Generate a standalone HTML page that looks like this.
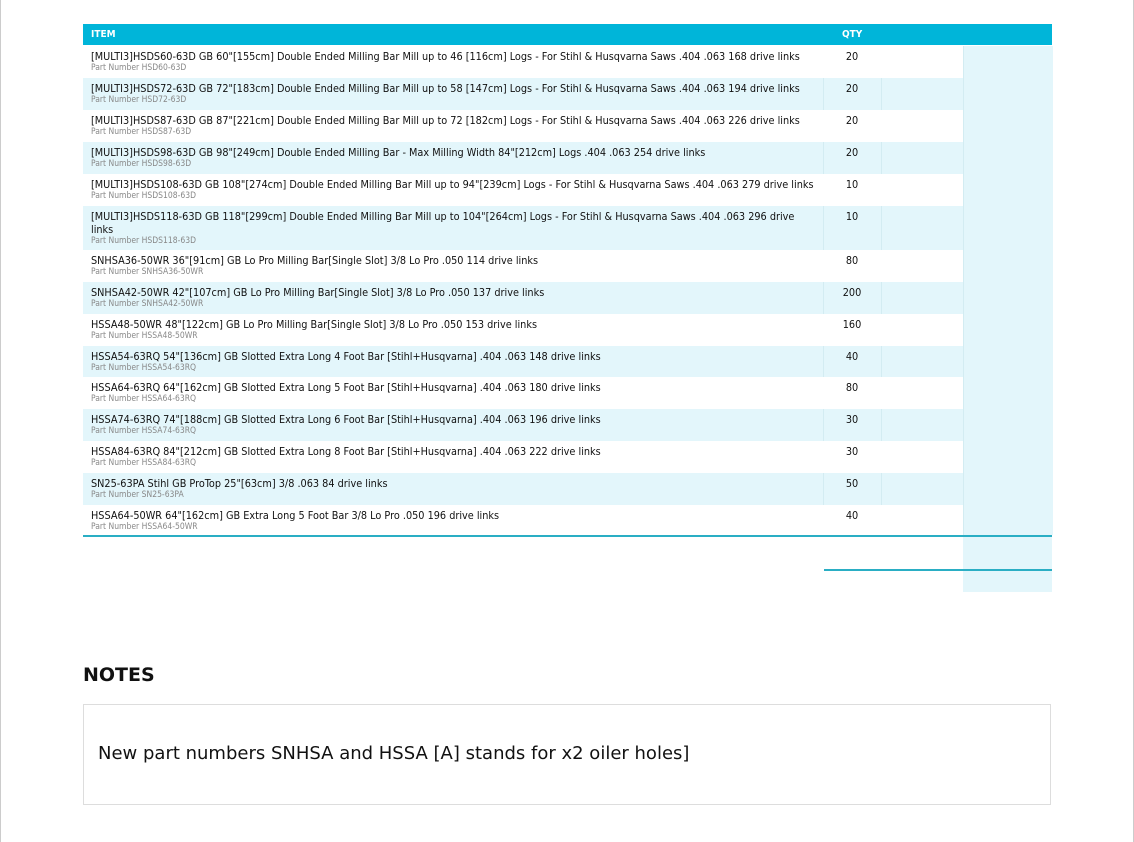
<!DOCTYPE html>
<html><head><meta charset="utf-8"><style>
body{margin:0;width:1134px;height:842px;background:#fff;position:relative;overflow:hidden;font-family:"DejaVu Sans Condensed","DejaVu Sans","Liberation Sans",sans-serif;}
.frame{position:absolute;left:0;top:0;width:1134px;height:842px;border-left:1px solid #ccc;border-right:1px solid #ccc;box-sizing:border-box}
.hdr{position:absolute;left:83px;top:24px;width:969px;height:21px;background:#00b5d9;color:#fff;font-weight:bold;font-size:10px}
.hdr span{position:absolute;top:5px}
.row{position:absolute;left:83px;width:969px;box-sizing:border-box}
.row.alt{background:#e3f6fb}
.row.alt .c{border-left:1px solid #d3ecf2}
.c{position:absolute;top:0;bottom:0}
.last{position:absolute;left:880px;width:89px;top:0;bottom:0;background:#e3f6fb;border-left:1px solid #d3ecf2}
.t{position:absolute;left:8px;top:4px;font-size:10.8px;color:#111;width:724px;line-height:13px}
.p{display:block;font-size:8.5px;color:#888;line-height:10px;margin-top:0}
.q{position:absolute;left:740px;width:58px;top:4px;text-align:center;font-size:10.8px;color:#111}
</style></head><body>
<div class="frame"></div>
<div class="hdr"><span style="left:8px">ITEM</span><span style="left:759px">QTY</span></div>
<div id="rows"></div>
<div style="position:absolute;left:83px;top:535px;width:969px;height:2px;background:#2aaec4"></div>
<div style="position:absolute;left:963px;top:537px;width:89px;height:55px;background:#e3f6fb"></div>
<div style="position:absolute;left:824px;top:569px;width:228px;height:2px;background:#2aaec4"></div>
<div style="position:absolute;left:83px;top:664px;font-family:'DejaVu Sans',sans-serif;font-weight:bold;font-size:19px;color:#111">NOTES</div>
<div style="position:absolute;left:83px;top:704px;width:968px;height:101px;border:1px solid #ddd;box-sizing:border-box"></div>
<div style="position:absolute;left:98px;top:743px;font-family:'DejaVu Sans',sans-serif;font-size:18px;color:#111">New part numbers SNHSA and HSSA [A] stands for x2 oiler holes]</div>
<script>
var d=[
["[MULTI3]HSDS60-63D GB 60\"[155cm] Double Ended Milling Bar Mill up to 46 [116cm] Logs - For Stihl &amp; Husqvarna Saws .404 .063 168 drive links","HSD60-63D",20,46,32],
["[MULTI3]HSDS72-63D GB 72\"[183cm] Double Ended Milling Bar Mill up to 58 [147cm] Logs - For Stihl &amp; Husqvarna Saws .404 .063 194 drive links","HSD72-63D",20,78,32],
["[MULTI3]HSDS87-63D GB 87\"[221cm] Double Ended Milling Bar Mill up to 72 [182cm] Logs - For Stihl &amp; Husqvarna Saws .404 .063 226 drive links","HSDS87-63D",20,110,32],
["[MULTI3]HSDS98-63D GB 98\"[249cm] Double Ended Milling Bar - Max Milling Width 84\"[212cm] Logs .404 .063 254 drive links","HSDS98-63D",20,142,32],
["[MULTI3]HSDS108-63D GB 108\"[274cm] Double Ended Milling Bar Mill up to 94\"[239cm] Logs - For Stihl &amp; Husqvarna Saws .404 .063 279 drive links","HSDS108-63D",10,174,32],
["[MULTI3]HSDS118-63D GB 118\"[299cm] Double Ended Milling Bar Mill up to 104\"[264cm] Logs - For Stihl &amp; Husqvarna Saws .404 .063 296 drive<br>links","HSDS118-63D",10,206,44],
["SNHSA36-50WR 36\"[91cm] GB Lo Pro Milling Bar[Single Slot] 3/8 Lo Pro .050 114 drive links","SNHSA36-50WR",80,250,32],
["SNHSA42-50WR 42\"[107cm] GB Lo Pro Milling Bar[Single Slot] 3/8 Lo Pro .050 137 drive links","SNHSA42-50WR",200,282,32],
["HSSA48-50WR 48\"[122cm] GB Lo Pro Milling Bar[Single Slot] 3/8 Lo Pro .050 153 drive links","HSSA48-50WR",160,314,32],
["HSSA54-63RQ 54\"[136cm] GB Slotted Extra Long 4 Foot Bar [Stihl+Husqvarna] .404 .063 148 drive links","HSSA54-63RQ",40,346,31],
["HSSA64-63RQ 64\"[162cm] GB Slotted Extra Long 5 Foot Bar [Stihl+Husqvarna] .404 .063 180 drive links","HSSA64-63RQ",80,377,32],
["HSSA74-63RQ 74\"[188cm] GB Slotted Extra Long 6 Foot Bar [Stihl+Husqvarna] .404 .063 196 drive links","HSSA74-63RQ",30,409,32],
["HSSA84-63RQ 84\"[212cm] GB Slotted Extra Long 8 Foot Bar [Stihl+Husqvarna] .404 .063 222 drive links","HSSA84-63RQ",30,441,32],
["SN25-63PA Stihl GB ProTop 25\"[63cm] 3/8 .063 84 drive links","SN25-63PA",50,473,32],
["HSSA64-50WR 64\"[162cm] GB Extra Long 5 Foot Bar 3/8 Lo Pro .050 196 drive links","HSSA64-50WR",40,505,30]];
var h="";d.forEach(function(r,i){var a=i%2==1;
h+='<div class="row'+(a?' alt':'')+'" style="top:'+r[3]+'px;height:'+r[4]+'px">'+(a?'<div class="c" style="left:740px"></div><div class="c" style="left:798px"></div>':'')+'<div class="last"></div><div class="t" style="width:760px">'+r[0]+'<span class="p">Part Number '+r[1]+'</span></div><div class="q">'+r[2]+'</div></div>';});
document.getElementById("rows").innerHTML=h;
</script>
</body></html>
